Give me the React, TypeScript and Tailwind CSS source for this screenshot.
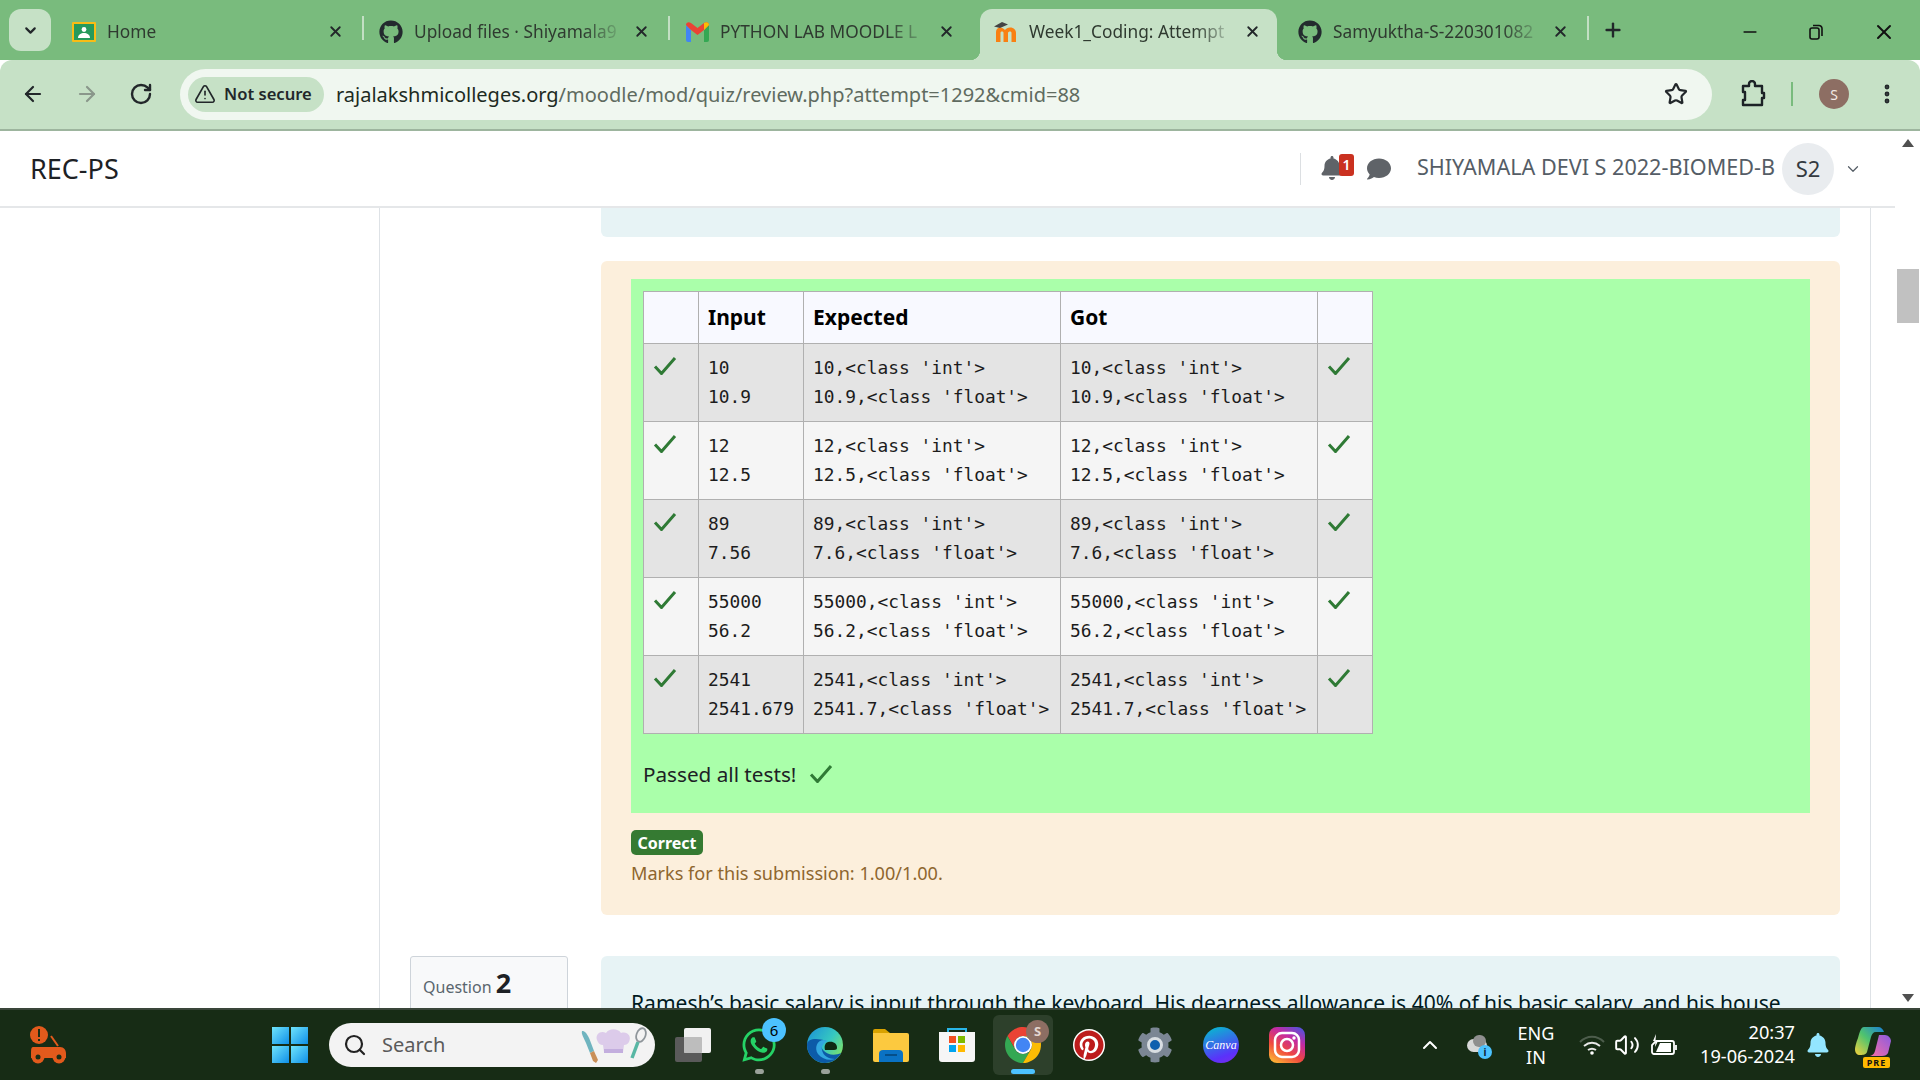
import { ArrowLeft, ArrowRight, ChevronDown, ChevronUp, EllipsisVertical, Minus, Plus, RotateCw, Search, Star, TriangleAlert, Volume2, X } from "lucide-react";
import { FaBell, FaCog, FaComment, FaGithub, FaPinterest, FaWhatsapp } from "react-icons/fa";

function ClassroomIcon() {
  return (
    <svg width="24" height="20" viewBox="0 0 24 20">
      <rect width="24" height="20" rx="1" fill="#f9bc15" />
      <rect x="2" y="2" width="20" height="16" fill="#269a5b" />
      <circle cx="12" cy="7.5" r="2.4" fill="#fff" />
      <path d="M6 16c0-3.4 3-5 6-5s6 1.600 6 5z" fill="#fff" />
    </svg>
  );
}

function GmailIcon() {
  return (
    <svg width="23" height="20" viewBox="0 0 23 20">
      <path d="M0 3v15a2 2 0 0 0 2 2h3V8z" fill="#4285f4" />
      <path d="M23 3v15a2 2 0 0 1-2 2h-3V8z" fill="#34a853" />
      <path d="M0 3c0-3 3-3.500 5-2l6.500 5L18 1c2-1.500 5-1 5 2l-5 5-6.500 5L5 8z" fill="#ea4335" />
      <path d="M18 1c2-1.500 5-1 5 2l-5 5z" fill="#fbbc04" />
    </svg>
  );
}

function MoodleIcon() {
  return (
    <svg width="24" height="24" viewBox="0 0 24 24">
      <path d="M2 22V12c0-3 2-4.500 4-4.500S9.500 8.500 11 10c1-1.500 3-2.500 5-2.500 4 0 6 2.500 6 5.500v9h-4.500v-9c0-1-.5-1.500-1.500-1.500s-2 .5-2 1.500v9H9.500v-9C9.500 12 9 11.500 8 11.500S6.500 12 6.500 13v9z" fill="#f98012" />
      <path d="M0 6.500 8 2l6 2.500-8 3.500z" fill="#444" />
    </svg>
  );
}

function Tab({ icon, title, active, sep = true, width = "w-[306px]" }: { icon: React.ReactNode; title: string; active?: boolean; sep?: boolean; width?: string }) {
  return (
    <div className={`relative flex h-[51px] shrink-0 items-center ${active ? "ml-[5px] w-[297px] rounded-t-[12px] bg-[#c6e1c6] pb-[6px] pl-[14px] pr-[16px]" : `${width} pl-[15px] pr-[20px]`}`}>
      {active && (
        <>
          <span className="absolute bottom-0 -left-[10px] h-[10px] w-[10px] bg-[radial-gradient(circle_at_0_0,transparent_10px,#c6e1c6_10.500px)]" />
          <span className="absolute bottom-0 -right-[10px] h-[10px] w-[10px] bg-[radial-gradient(circle_at_100%_0,transparent_10px,#c6e1c6_10.500px)]" />
        </>
      )}
      <span className="flex w-[24px] shrink-0 items-center justify-center">{icon}</span>
      <span className="ml-[11px] min-w-0 flex-1 whitespace-nowrap text-[17.300px] leading-[24px] text-[#2f3a30] [mask-image:linear-gradient(to_right,#000_80%,transparent_100%)]">
        {title}
      </span>
      <X className="ml-[8px] shrink-0 text-[#22272a]" size={17} strokeWidth={2.6} />
      {sep && !active && <span className="absolute right-0 top-[10px] h-[24px] w-[2px] bg-[#c3dfc4]" />}
    </div>
  );
}

function Check() {
  return (
    <svg width="24" height="18" viewBox="0 0 24 18" fill="none">
      <path d="M2 9.500 8.500 16.500 22 1" stroke="#2f7a35" strokeWidth="3" />
    </svg>
  );
}

const rows = [
  { input: ["10", "10.9"], out: ["10,<class 'int'>", "10.9,<class 'float'>"], bg: "bg-[#e4e4e4]" },
  { input: ["12", "12.5"], out: ["12,<class 'int'>", "12.5,<class 'float'>"], bg: "bg-[#f5f5f5]" },
  { input: ["89", "7.56"], out: ["89,<class 'int'>", "7.6,<class 'float'>"], bg: "bg-[#e4e4e4]" },
  { input: ["55000", "56.2"], out: ["55000,<class 'int'>", "56.2,<class 'float'>"], bg: "bg-[#f5f5f5]" },
  { input: ["2541", "2541.679"], out: ["2541,<class 'int'>", "2541.7,<class 'float'>"], bg: "bg-[#e4e4e4]" },
];

function Lines({ lines }: { lines: string[] }) {
  return (
    <td className="border border-[#b0b0b0] px-[9px] pb-[9.400px] pt-[9px] align-top font-['DejaVu_Sans_Mono',monospace] text-[17.850px] leading-[29.300px] whitespace-pre text-[#1c1c1c]">
      {lines.map((l) => (
        <div key={l}>{l}</div>
      ))}
    </td>
  );
}

function ResultTable() {
  return (
    <table className="w-[729px] table-fixed border-collapse">
      <colgroup>
        <col className="w-[55px]" />
        <col className="w-[105px]" />
        <col className="w-[257px]" />
        <col className="w-[257px]" />
        <col className="w-[55px]" />
      </colgroup>
      <thead>
        <tr className="h-[52px] bg-[#f8f9ff] text-left text-[21px] font-bold text-black">
          <th className="border border-[#b0b0b0]" />
          <th className="border border-[#b0b0b0] px-[9px]">Input</th>
          <th className="border border-[#b0b0b0] px-[9px]">Expected</th>
          <th className="border border-[#b0b0b0] px-[9px]">Got</th>
          <th className="border border-[#b0b0b0]" />
        </tr>
      </thead>
      <tbody>
        {rows.map((r) => (
          <tr key={r.input[0]} className={r.bg}>
            <td className="border border-[#b0b0b0] pl-[9px] pt-[13px] align-top"><Check /></td>
            <Lines lines={r.input} />
            <Lines lines={r.out} />
            <Lines lines={r.out} />
            <td className="border border-[#b0b0b0] pl-[9px] pt-[13px] align-top"><Check /></td>
          </tr>
        ))}
      </tbody>
    </table>
  );
}

function TabStrip() {
  return (
    <div className="flex h-[60px] shrink-0 items-start bg-[#79bb7d]">
      <div className="ml-[9px] mr-[6px] mt-[9px] flex h-[42px] w-[42px] shrink-0 items-center justify-center rounded-[12px] bg-[#c6e1c6]">
        <ChevronDown size={17} strokeWidth={3} className="text-[#22272a]" />
      </div>
      <div className="flex pt-[6px]">
        <Tab icon={<ClassroomIcon />} title="Home" width="w-[307px]" />
        <Tab icon={<FaGithub size={24} className="text-[#232a2e]" />} title="Upload files · Shiyamala9" />
        <Tab icon={<GmailIcon />} title="PYTHON LAB MOODLE L" sep={false} width="w-[305px]" />
      </div>
      <div className="flex pt-[9px]">
        <Tab icon={<MoodleIcon />} title="Week1_Coding: Attempt" active />
      </div>
      <div className="ml-[6px] flex pt-[6px]">
        <Tab icon={<FaGithub size={24} className="text-[#232a2e]" />} title="Samyuktha-S-220301082" />
      </div>
      <Plus size={22} strokeWidth={2.6} className="ml-[13px] mt-[19px] shrink-0 text-[#22272a]" />
      <div className="ml-auto mt-[20px] flex items-center gap-[48px] pr-[24px] text-[#111]">
        <Minus size={20} strokeWidth={2} />
        <svg width="16" height="16" viewBox="0 0 16 16" fill="none" stroke="#111" strokeWidth="1.600">
          <rect x="2" y="4" width="9" height="11" rx="2" />
          <path d="M5 1.500h6a3 3 0 0 1 3 3V12" />
        </svg>
        <X size={24} strokeWidth={2} />
      </div>
    </div>
  );
}

function Toolbar() {
  return (
    <div className="flex h-[71px] shrink-0 items-center rounded-t-[12px] border-b-2 border-[#9db59e] bg-[#c6e1c6] pb-[1px]">
      <div className="flex w-[180px] items-center gap-[30px] pl-[21px] text-[#22272a]">
        <ArrowLeft size={24} strokeWidth={2.2} />
        <ArrowRight size={24} strokeWidth={2.2} className="text-[#8a978b]" />
        <RotateCw size={24} strokeWidth={2.4} />
      </div>
      <div className="flex h-[51px] w-[1532px] items-center rounded-full bg-[#f0f7f0] pl-[8px] pr-[24px]">
        <div className="flex h-[35px] w-[136px] items-center gap-[8px] rounded-full bg-[#c6e1c6] pl-[6px] text-[16.600px] font-semibold text-[#22272a]">
          <TriangleAlert size={22} strokeWidth={1.8} />
          <span>Not secure</span>
        </div>
        <div className="ml-[12px] flex-1 whitespace-nowrap pt-[1px] text-[20px] text-[#5f6b60]">
          <span className="text-[#1c2a22]">rajalakshmicolleges.org</span>/moodle/mod/quiz/review.php?attempt=1292&cmid=88
        </div>
        <Star size={24} strokeWidth={2.2} className="text-[#22272a]" />
      </div>
      <div className="flex flex-1 items-center pl-[28px] text-[#22272a]">
        <svg width="26" height="28" viewBox="0 0 26 28" fill="none" stroke="#1c2226" strokeWidth="2.400">
          <path d="M3 6h6V4a3 3 0 0 1 6 0v2h7v7h2v5h-2v7H3v-5h2v-8H3z" strokeLinejoin="round" />
        </svg>
        <span className="ml-[25px] h-[24px] w-[2px] bg-[#79bb7d]" />
        <span className="ml-[26px] flex h-[30px] w-[30px] items-center justify-center rounded-full bg-[#8d6e63] text-[14px] text-[#f3e9e5]">S</span>
        <EllipsisVertical size={24} strokeWidth={2.8} className="ml-[26px]" />
      </div>
    </div>
  );
}

function PageHeader() {
  return (
    <div className="flex h-[77px] shrink-0 items-center border-b-2 border-[#e5e7e9] bg-white pl-[30px]">
      <div className="mt-[2px] text-[27px] text-[#1d2125]">REC-PS</div>
      <div className="ml-auto flex items-center pr-[33px]">
        <span className="h-[32px] w-px bg-[#dcdfe2]" />
        <div className="relative ml-[19px] h-[26px] w-[30px]">
          <FaBell size={24} className="text-[#5f6368]" />
          <span className="absolute -top-[2px] left-[19px] flex h-[22px] w-[15px] items-center justify-center rounded-[3px] bg-[#ca3120] text-[14px] font-semibold text-white">1</span>
        </div>
        <FaComment size={24} className="ml-[17px] text-[#5f6368]" />
        <span className="-mt-[4px] ml-[26px] text-[21.600px] leading-[30px] text-[#555d66]">SHIYAMALA DEVI S 2022-BIOMED-B</span>
        <span className="ml-[7px] flex h-[52px] w-[52px] items-center justify-center rounded-full bg-[#e9ecef] text-[22px] text-[#343a40]">S2</span>
        <ChevronDown size={18} strokeWidth={1.6} className="ml-[10px] text-[#555d66]" />
      </div>
    </div>
  );
}

function Content() {
  return (
    <div className="flex min-h-0 flex-1 overflow-hidden bg-white pr-[24px]">
      <div className="w-[380px] shrink-0 border-r border-[#dee2e6]" />
      <div className="flex min-w-0 flex-1 flex-col border-r border-[#dee2e6] pr-[30px]">
        <div className="ml-[221px] h-[29px] shrink-0 rounded-b-[6px] bg-[#e7f3f5]" />
        <div className="ml-[221px] mt-[24px] shrink-0 rounded-[6px] bg-[#fcefdc] pb-[27px] pl-[30px] pr-[30px] pt-[18px]">
          <div className="h-[534px] bg-[#aaffaa] pl-[12px] pt-[12px]">
            <ResultTable />
            <div className="mt-[25px] flex items-center gap-[13px] text-[20.700px] leading-[30px] text-[#1d2125]">
              Passed all tests!
              <Check />
            </div>
          </div>
          <div className="mt-[17px] flex h-[25px] w-[72px] items-center justify-center rounded-[5px] bg-[#357a32] text-[16px] font-bold text-white">Correct</div>
          <div className="mt-[3px] text-[18.100px] leading-[30px] text-[#8e662e]">Marks for this submission: 1.00/1.00.</div>
        </div>
        <div className="ml-[30px] mt-[41px] flex gap-[33px]">
          <div className="h-[80px] w-[158px] shrink-0 rounded-[3px] border border-[#ced4da] bg-[#f8f9fa] pl-[12px] pt-[6px] text-[16px] text-[#5a666e]">
            Question <span className="text-[27px] font-bold text-[#1d2125]">2</span>
          </div>
          <div className="h-[120px] flex-1 whitespace-nowrap rounded-[6px] bg-[#e7f3f5] pl-[30px] pt-[31px] text-[21.050px] text-[#001a1e]">
            Ramesh’s basic salary is input through the keyboard. His dearness allowance is 40% of his basic salary, and his house
          </div>
        </div>
      </div>
    </div>
  );
}

function ScrollBar() {
  return (
    <div className="flex w-[25px] shrink-0 flex-col items-center bg-white">
      <div className="mt-[8px] h-0 w-0 border-x-[6px] border-b-[8px] border-x-transparent border-b-[#505050]" />
      <div className="mt-[122px] h-[54px] w-[22px] bg-[#c1c1c1]" />
      <div className="mb-[6px] mt-auto h-0 w-0 border-x-[6px] border-t-[8px] border-x-transparent border-t-[#505050]" />
    </div>
  );
}

function CarIcon() {
  return (
    <svg width="37" height="38" viewBox="0 0 37 38" fill="#e25a1c" className="shrink-0">
      <circle cx="9" cy="9" r="9" />
      <rect x="8" y="3" width="2" height="8" fill="#1a2e16" />
      <rect x="8" y="13" width="2" height="2" fill="#1a2e16" />
      <path d="M21 10l7 10" stroke="#e25a1c" strokeWidth="2" />
      <path d="M3 21h27c4 0 6 3 6 7v4H1v-4c0-4 0-7 2-7z" />
      <circle cx="8" cy="31" r="6.500" />
      <circle cx="29" cy="31" r="6.500" />
      <circle cx="8" cy="31" r="2.500" fill="#1a2e16" />
      <circle cx="29" cy="31" r="2.500" fill="#1a2e16" />
    </svg>
  );
}

function WindowsLogo() {
  return (
    <svg width="36" height="36" viewBox="0 0 36 36">
      <defs>
        <linearGradient id="win" x1="0" y1="0" x2="1" y2="1">
          <stop offset="0" stopColor="#6fe4fb" />
          <stop offset="1" stopColor="#0f8fe8" />
        </linearGradient>
      </defs>
      <rect x="0" y="0" width="17" height="17" fill="url(#win)" />
      <rect x="19" y="0" width="17" height="17" fill="url(#win)" />
      <rect x="0" y="19" width="17" height="17" fill="url(#win)" />
      <rect x="19" y="19" width="17" height="17" fill="url(#win)" />
    </svg>
  );
}

function ChefArt() {
  return (
    <svg width="66" height="36" viewBox="0 0 66 36" className="shrink-0">
      <path d="M1 4c3-1 7 5 9 12l3 8-4 2-4-10C3 11 0 7 1 4z" fill="#6fb4bf" />
      <path d="M9 26l4-2 4 9-2 3-3-2z" fill="#c98f58" />
      <path d="M16 13c-2-6 4-10 9-7 3-5 12-5 15 0 6-2 11 3 8 9-1 2-3 3-5 3l-1 7H23l-1-7c-3 0-5-2-6-5z" fill="#dccbea" />
      <path d="M23 22h19v4H23z" fill="#c3aede" />
      <ellipse cx="60" cy="8" rx="4.500" ry="7" transform="rotate(20 60 8)" fill="none" stroke="#8f969b" strokeWidth="1.800" />
      <path d="M57 15l-6 16" stroke="#58b7a4" strokeWidth="3.500" />
    </svg>
  );
}

function TaskView() {
  return (
    <svg width="36" height="34" viewBox="0 0 36 34">
      <rect x="0" y="9" width="27" height="25" rx="2" fill="#5a5a5a" />
      <rect x="9" y="0" width="27" height="25" rx="2" fill="#f1f1f1" />
      <rect x="9" y="9" width="18" height="16" rx="1" fill="#bdbdbd" />
    </svg>
  );
}

function EdgeIcon() {
  return (
    <svg width="36" height="36" viewBox="0 0 36 36">
      <defs>
        <linearGradient id="edgeA" x1="0" y1="0" x2="1" y2="0.700">
          <stop offset="0" stopColor="#1a8fd8" />
          <stop offset="0.600" stopColor="#36c8c0" />
          <stop offset="1" stopColor="#7de36a" />
        </linearGradient>
      </defs>
      <circle cx="18" cy="18" r="18" fill="url(#edgeA)" />
      <path d="M0 18c0 10 8 18 18 18 7 0 13-4 16-10-6 3-14 2-18-3-3-4-1-8 3-9-8-3-19-3-19 4z" fill="#0c5ba8" />
      <path d="M17 13c-7 0-10 8-6 14 4 5 11 7 17 5-6 0-12-3-13-9-1-4 2-8 6-9z" fill="#32a7e0" />
      <path d="M21 15c5-1 9 1 9 6 0 1-1 2-3 2h-9c-1-4 0-7 3-8z" fill="#0f2a12" />
    </svg>
  );
}

function FolderIcon() {
  return (
    <svg width="36" height="33" viewBox="0 0 36 33">
      <path d="M0 2a2 2 0 0 1 2-2h10l5 4h-17z" fill="#d9a200" />
      <path d="M0 4h34a2 2 0 0 1 2 2v25a2 2 0 0 1-2 2H2a2 2 0 0 1-2-2z" fill="#fcc93f" />
      <path d="M6 33v-8a4 4 0 0 1 4-4h16a4 4 0 0 1 4 4v8z" fill="#0a72c4" />
      <rect x="12" y="25" width="12" height="2" fill="#054f8a" />
    </svg>
  );
}

function StoreIcon() {
  return (
    <svg width="36" height="36" viewBox="0 0 36 36">
      <path d="M9 6V2h18v4" fill="none" stroke="#29b6e8" strokeWidth="2" />
      <path d="M0 5h36v27a3 3 0 0 1-3 3H3a3 3 0 0 1-3-3z" fill="#f6f6f6" />
      <rect x="10" y="9" width="7" height="7" fill="#f25022" />
      <rect x="19" y="9" width="7" height="7" fill="#7fba00" />
      <rect x="10" y="18" width="7" height="7" fill="#00a4ef" />
      <rect x="19" y="18" width="7" height="7" fill="#ffb900" />
    </svg>
  );
}

function ChromeIcon() {
  return (
    <svg width="36" height="36" viewBox="4 4 40 40">
      <path d="M24 4C16.600 4 10.200 8 6.700 14l8.700 15A10 10 0 0 1 24 14h17.300C37.800 8 31.400 4 24 4z" fill="#ea4335" />
      <path d="M6.700 14A20 20 0 0 0 24 44l8.700-15a10 10 0 0 1-17.400 0z" fill="#34a853" />
      <path d="M41.300 14H24a10 10 0 0 1 8.700 15L24 44a20 20 0 0 0 17.300-30z" fill="#fbbc04" />
      <circle cx="24" cy="24" r="10" fill="#fff" />
      <circle cx="24" cy="24" r="8" fill="#4285f4" />
    </svg>
  );
}

function InstagramIcon() {
  return (
    <svg width="36" height="36" viewBox="0 0 36 36">
      <defs>
        <linearGradient id="ig" x1="0.200" y1="1" x2="0.800" y2="0">
          <stop offset="0" stopColor="#fdb035" />
          <stop offset="0.350" stopColor="#f0483e" />
          <stop offset="0.700" stopColor="#c32aa3" />
          <stop offset="1" stopColor="#5b4fd8" />
        </linearGradient>
      </defs>
      <rect width="36" height="36" rx="8" fill="url(#ig)" />
      <rect x="6" y="6" width="24" height="24" rx="7" fill="none" stroke="#fff" strokeWidth="2.500" />
      <circle cx="18" cy="18" r="6" fill="none" stroke="#fff" strokeWidth="2.500" />
      <circle cx="25" cy="11" r="1.700" fill="#fff" />
    </svg>
  );
}

function CopilotIcon() {
  return (
    <div className="relative h-[36px] w-[36px]">
      <svg width="36" height="30" viewBox="0 0 36 30">
        <defs>
          <linearGradient id="cpA" x1="0" y1="1" x2="1" y2="0">
            <stop offset="0" stopColor="#f6d13b" />
            <stop offset="0.500" stopColor="#4fc36e" />
            <stop offset="1" stopColor="#1a7fd8" />
          </linearGradient>
          <linearGradient id="cpB" x1="0" y1="1" x2="1" y2="0">
            <stop offset="0" stopColor="#f46fa6" />
            <stop offset="1" stopColor="#8b5be0" />
          </linearGradient>
        </defs>
        <path d="M9 0h14c3 0 5 2 6 5l-8 0c-3 0-4 2-5 5l-4 15c-1 3-5 3-7 3-3 0-5-2-5-6 0-2 1-6 3-11C5 4 6 0 9 0z" fill="url(#cpA)" />
        <path d="M24 8h6c3 0 6 3 6 6l-3 12c-1 2-3 3-6 3H15c3-1 4-2 5-5z" fill="url(#cpB)" />
      </svg>
      <span className="absolute -bottom-[5px] left-[8px] flex h-[11px] w-[27px] items-center justify-center rounded-[2px] bg-[#ffb900] text-[9px] font-bold leading-none tracking-[1px] text-[#111]">PRE</span>
    </div>
  );
}

function Slot({ children, dot, active }: { children: React.ReactNode; dot?: boolean; active?: boolean }) {
  return (
    <div className="relative flex h-[60px] w-[66px] shrink-0 items-center justify-center">
      {active && <span className="absolute inset-x-[3px] inset-y-0 rounded-[6px] bg-[#2d402b]" />}
      <span className="relative">{children}</span>
      {dot && <span className="absolute bottom-[1px] h-[5px] w-[9px] rounded-full bg-[#9aa29a]" />}
      {active && <span className="absolute bottom-[1px] h-[5px] w-[24px] rounded-full bg-[#4cc2ff]" />}
    </div>
  );
}

function Taskbar() {
  return (
    <div className="flex h-[72px] shrink-0 items-center border-t-2 border-[#3a463a] bg-[#172c15] pl-[30px] text-white">
      <CarIcon />
      <div className="ml-[205px] shrink-0"><WindowsLogo /></div>
      <div className="ml-[21px] flex h-[44px] w-[326px] shrink-0 items-center rounded-full bg-[#f3f3f3] pl-[14px] pr-[8px] text-[#5a5a5a]">
        <Search size={24} strokeWidth={2.2} className="text-[#222]" />
        <span className="ml-[15px] flex-1 text-[20px]">Search</span>
        <ChefArt />
      </div>
      <div className="ml-[5px] flex shrink-0 items-center">
        <Slot><TaskView /></Slot>
        <Slot dot>
          <FaWhatsapp size={38} className="text-[#25d366]" />
          <span className="absolute -right-[8px] -top-[8px] flex h-[24px] w-[24px] items-center justify-center rounded-full bg-[#4cc2ff] text-[15px] text-black">6</span>
        </Slot>
        <Slot dot><EdgeIcon /></Slot>
        <Slot><FolderIcon /></Slot>
        <Slot><StoreIcon /></Slot>
        <Slot active>
          <ChromeIcon />
          <span className="absolute -right-[8px] -top-[7px] flex h-[23px] w-[23px] items-center justify-center rounded-full bg-[#8d6e63] text-[13px] font-bold text-[#e4d6d0]">S</span>
        </Slot>
        <Slot>
          <span className="flex h-[32px] w-[32px] items-center justify-center rounded-full bg-white">
            <FaPinterest size={30} className="text-[#bd1c1c]" />
          </span>
        </Slot>
        <Slot>
          <span className="relative flex h-[36px] w-[36px] items-center justify-center">
            <FaCog size={36} className="text-[#7b8694]" />
            <span className="absolute h-[16px] w-[16px] rounded-full border-[3px] border-[#d8dde2] bg-[#0f5fae]" />
          </span>
        </Slot>
        <Slot>
          <span className="flex h-[36px] w-[36px] items-center justify-center rounded-full bg-[linear-gradient(160deg,#00c4cc,#5a32fa_75%,#7d2ae8)] font-['Liberation_Serif',serif] text-[12px] italic text-white">Canva</span>
        </Slot>
        <Slot><InstagramIcon /></Slot>
      </div>
      <ChevronUp size={24} strokeWidth={2} className="ml-[98px] shrink-0" />
      <div className="relative ml-[25px] h-[20px] w-[24px] shrink-0">
        <span className="absolute left-0 top-[4px] h-[13px] w-[20px] rounded-full bg-[#d8d8d8]" />
        <span className="absolute left-[6px] top-0 h-[12px] w-[13px] rounded-full bg-[#8f8f8f]" />
        <span className="absolute -bottom-[4px] -right-[1px] flex h-[14px] w-[14px] items-center justify-center rounded-full bg-[#4cc2ff] text-[10px] font-bold text-[#123]">i</span>
      </div>
      <div className="ml-[15px] -mt-[1px] w-[60px] shrink-0 text-center text-[18px] leading-[24px]">
        <div>ENG</div>
        <div>IN</div>
      </div>
      <svg className="ml-[13px] shrink-0" width="26" height="20" viewBox="0 0 26 20" fill="none" strokeWidth="2">
        <path d="M1 7c7-7 17-7 24 0" stroke="#4d5d4c" />
        <path d="M5 11c5-4 11-4 16 0" stroke="#e8e8e8" />
        <path d="M9 15c3-2 5-2 8 0" stroke="#e8e8e8" />
        <circle cx="13" cy="18" r="1.800" fill="#fff" />
      </svg>
      <Volume2 size={26} strokeWidth={1.8} className="ml-[9px] shrink-0" />
      <svg className="ml-[11px] shrink-0" width="26" height="24" viewBox="0 0 26 24" fill="none" stroke="#fff" strokeWidth="1.800">
        <path d="M5 8h16a2 2 0 0 1 2 2v9a2 2 0 0 1-2 2H3a2 2 0 0 1-2-2v-7z" />
        <path d="M25 12v5" />
        <path d="M5 1 2 8h5L4 14" fill="#fff" stroke="none" />
        <path d="M9 10h11v9H5z" fill="#fff" stroke="none" />
      </svg>
      <div className="-mt-[2px] ml-[12px] w-[106px] shrink-0 text-right text-[18.200px] leading-[24px]">
        <div>20:37</div>
        <div>19-06-2024</div>
      </div>
      <FaBell size={24} className="ml-[11px] shrink-0 text-[#93e6ff]" />
      <div className="ml-[25px] shrink-0"><CopilotIcon /></div>
    </div>
  );
}

export default function App() {
  return (
    <div className="flex h-screen w-screen flex-col overflow-hidden font-['Noto_Sans',sans-serif]">
      <TabStrip />
      <Toolbar />
      <div className="flex min-h-0 flex-1">
        <div className="flex min-w-0 flex-1 flex-col">
          <PageHeader />
          <Content />
        </div>
        <ScrollBar />
      </div>
      <Taskbar />
    </div>
  );
}
